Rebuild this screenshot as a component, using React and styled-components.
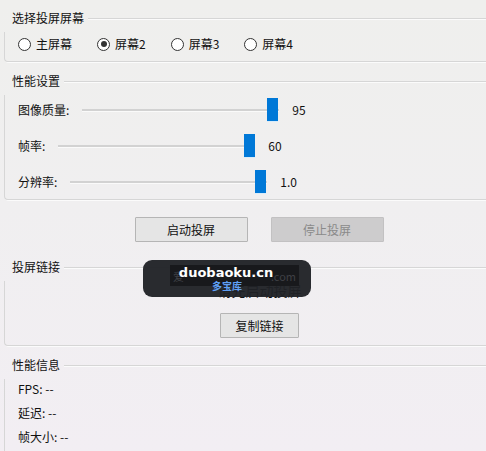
import React from "react";
import styled, { createGlobalStyle } from "styled-components";

const Global = createGlobalStyle`
  html, body { margin: 0; padding: 0; overflow: hidden; }
  body {
    background: linear-gradient(180deg, #efefed 0%, #f0eff0 45%, #f2eef3 100%);
    font-family: "Noto Sans CJK SC", "Microsoft YaHei", sans-serif;
    font-size: 12px;
    color: #111;
  }
`;

const Page = styled.div`
  position: relative;
  box-sizing: border-box;
  width: 518px;
  height: 451px;
  padding: 8px 4px 0 4px;
  display: flex;
  flex-direction: column;
`;

const Group = styled.section`
  display: flex;
  flex-direction: column;
  margin-top: ${(p) => p.$mt || 0}px;
`;

const Header = styled.div`
  display: flex;
  align-items: flex-start;
  height: 24px;
`;

const Title = styled.div`
  padding: 0 4px 0 8px;
  line-height: 20px;
  font-size: 12px;
  color: #111;
  white-space: nowrap;
`;

const Rule = styled.div`
  flex: 1;
  height: 1px;
  margin-top: 10px;
  background: #d6d6d6;
  box-shadow: 0 1px 0 #fbfbfb;
`;

const Frame = styled.div`
  border-left: 1px solid #d6d6d6;
  border-bottom: 1px solid #d6d6d6;
  border-bottom-left-radius: 4px;
  box-shadow: 1px 1px 0 #fbfbfb;
  padding: ${(p) => p.$pad};
  display: flex;
  flex-direction: column;
  gap: ${(p) => p.$gap || 0}px;
  align-items: ${(p) => p.$align || "stretch"};
`;

const RadioRow = styled.div`
  display: flex;
  align-items: center;
  height: 16px;
  gap: 25px;
`;

const RadioItem = styled.label`
  display: flex;
  align-items: center;
  gap: 5px;
  line-height: 16px;
`;

const RadioCircle = styled.span`
  box-sizing: border-box;
  width: 13px;
  height: 13px;
  border-radius: 50%;
  border: 1px solid #333;
  background: #fff;
  display: flex;
  align-items: center;
  justify-content: center;
  &::after {
    content: "";
    width: 6px;
    height: 6px;
    border-radius: 50%;
    background: ${(p) => (p.$checked ? "#333" : "transparent")};
  }
`;

const SliderRow = styled.div`
  display: flex;
  align-items: center;
  height: 24px;
`;

const SliderLabel = styled.span`
  line-height: 18px;
  margin-right: 13px;
`;

const Slider = styled.div`
  position: relative;
  width: 197px;
  height: 24px;
  margin-right: 13px;
  &::before {
    content: "";
    position: absolute;
    left: 0;
    right: 0;
    top: 11px;
    height: 2px;
    background: #d2d2d2;
    box-shadow: 0 1px 0 #fafafa;
  }
`;

const Thumb = styled.div`
  position: absolute;
  top: 0;
  width: 11px;
  height: 23px;
  background: #0078d7;
  box-shadow: 0 1px 0 #d8ecfa;
`;

const Value = styled.span`
  line-height: 18px;
`;

const ButtonRow = styled.div`
  display: flex;
  justify-content: center;
  gap: 23px;
  margin-top: 17px;
`;

const Button = styled.button`
  box-sizing: border-box;
  width: ${(p) => p.$w}px;
  height: 25px;
  padding: 0;
  font-family: inherit;
  font-size: 12px;
  color: ${(p) => (p.disabled ? "#8a8a8a" : "#111")};
  background: ${(p) => (p.disabled ? "#cdcccd" : "#e5e5e5")};
  border: 1px solid ${(p) => (p.disabled ? "#c2c1c2" : "#b5b5b5")};
  border-radius: 1px;
`;

const Status = styled.div`
  line-height: 18px;
  font-size: 14px;
  color: #111;
`;

const InfoLine = styled.div`
  line-height: 18px;
`;

const Watermark = styled.div`
  position: absolute;
  left: 143px;
  top: 260px;
  width: 168px;
  height: 37px;
  border-radius: 9px;
  background: rgba(32, 34, 38, 0.96);
  display: flex;
  flex-direction: column;
  align-items: center;
  justify-content: center;
`;

const GhostBar = styled.div`
  position: absolute;
  left: 27px;
  top: 5px;
  width: 129px;
  height: 21px;
  background: #18191c;
  display: flex;
  justify-content: space-between;
  align-items: center;
  padding: 0 3px;
  box-sizing: border-box;
  font-size: 11px;
  color: #3f4045;
`;

const MarkTitle = styled.div`
  position: relative;
  margin-left: -2px;
  font-family: "DejaVu Sans", "Noto Sans", sans-serif;
  font-weight: bold;
  font-size: 13px;
  line-height: 14px;
  color: #fff;
`;

const MarkSub = styled.div`
  position: relative;
  font-size: 10px;
  line-height: 12px;
  color: #5f9ff5;
  font-weight: bold;
`;

const radios = [
  { label: "主屏幕", checked: false },
  { label: "屏幕2", checked: true },
  { label: "屏幕3", checked: false },
  { label: "屏幕4", checked: false },
];

const sliders = [
  { label: "图像质量:", value: "95", pos: 185 },
  { label: "帧率:", value: "60", pos: 186 },
  { label: "分辨率:", value: "1.0", pos: 185 },
];

function GroupBox({ title, mt, pad, gap, align, children }) {
  return (
    <Group $mt={mt}>
      <Header>
        <Title>{title}</Title>
        <Rule />
      </Header>
      <Frame $pad={pad} $gap={gap} $align={align}>
        {children}
      </Frame>
    </Group>
  );
}

export default function App() {
  return (
    <>
      <Global />
      <Page>
        <GroupBox title="选择投屏屏幕" pad="4px 0 9px 13px">
          <RadioRow>
            {radios.map((r) => (
              <RadioItem key={r.label}>
                <RadioCircle $checked={r.checked} />
                {r.label}
              </RadioItem>
            ))}
          </RadioRow>
        </GroupBox>

        <GroupBox title="性能设置" mt={9} pad="3px 0 5px 13px" gap={12}>
          {sliders.map((s) => (
            <SliderRow key={s.label}>
              <SliderLabel>{s.label}</SliderLabel>
              <Slider>
                <Thumb style={{ left: s.pos }} />
              </Slider>
              <Value>{s.value}</Value>
            </SliderRow>
          ))}
        </GroupBox>

        <ButtonRow>
          <Button $w={113}>启动投屏</Button>
          <Button $w={113} disabled>
            停止投屏
          </Button>
        </ButtonRow>

        <Group $mt={15}>
          <Header>
            <Title>投屏链接</Title>
            <Rule />
          </Header>
          <Frame $pad="0 0 7px 0" $gap={14} $align="center">
            <Status>请先启动投屏</Status>
            <Button $w={79}>复制链接</Button>
          </Frame>
        </Group>

        <GroupBox title="性能信息" mt={9} pad="1px 0 40px 13px" gap={6}>
          <InfoLine>FPS: --</InfoLine>
          <InfoLine>延迟: --</InfoLine>
          <InfoLine>帧大小: --</InfoLine>
        </GroupBox>

        <Watermark>
          <GhostBar>
            <span>爱</span>
            <span>.com</span>
          </GhostBar>
          <MarkTitle>duobaoku.cn</MarkTitle>
          <MarkSub>多宝库</MarkSub>
        </Watermark>
      </Page>
    </>
  );
}
